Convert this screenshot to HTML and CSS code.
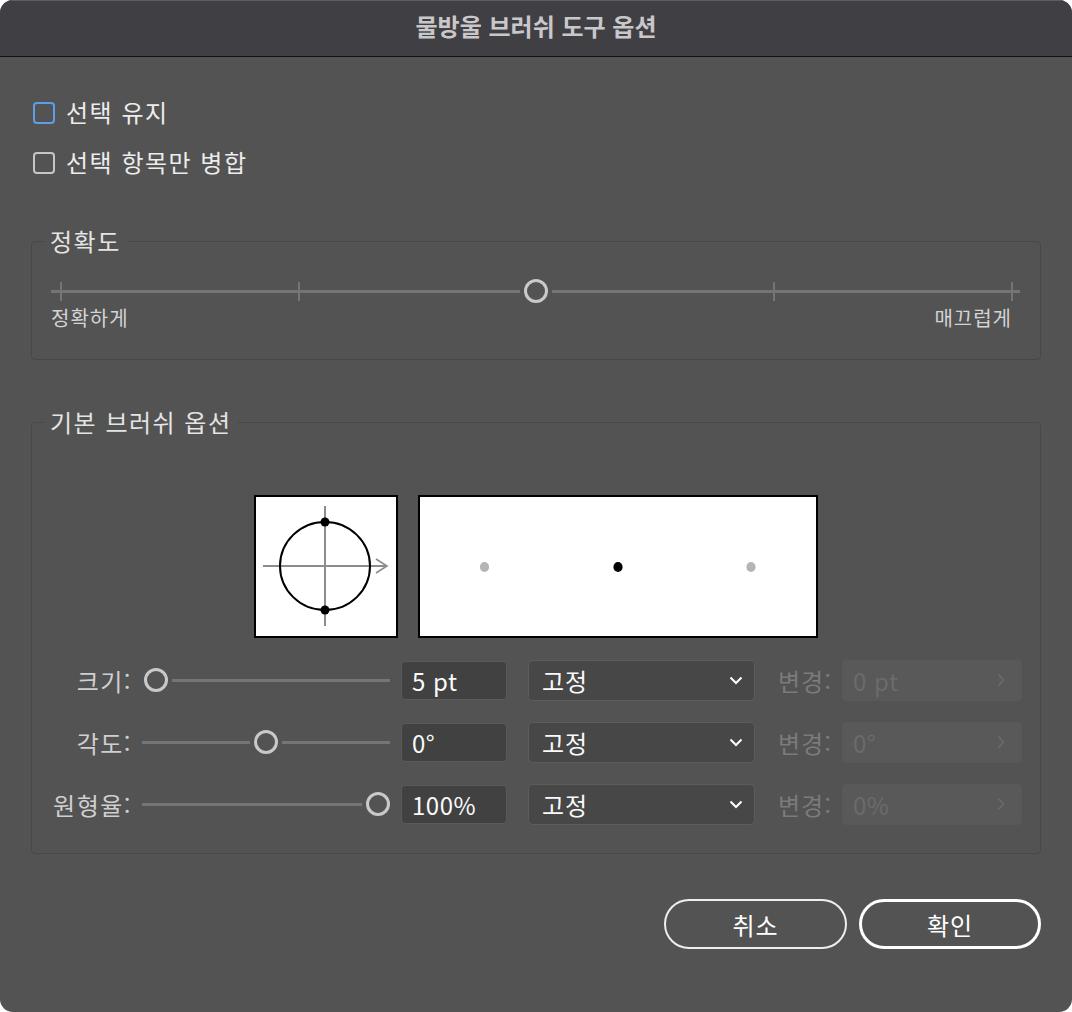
FILE: index.html
```html
<!DOCTYPE html>
<html lang="ko">
<head>
    <meta charset="UTF-8">
    <meta name="viewport" content="width=device-width, initial-scale=1.0">
    <title>물방울 브러쉬 도구 옵션</title>
    <link rel="stylesheet" href="styles.css">
</head>
<body>
    <div class="dialog">
        <div class="titlebar">물방울 브러쉬 도구 옵션</div>

        <div class="content">
            <label class="check-row">
                <span class="checkbox focused"></span>
                <span>선택 유지</span>
            </label>
            <label class="check-row second">
                <span class="checkbox"></span>
                <span>선택 항목만 병합</span>
            </label>

            <fieldset class="group precision-group">
                <legend>정확도</legend>
                <div class="precision">
                    <div class="track"></div>
                    <div class="ticks">
                        <span></span><span></span><span></span><span></span><span></span>
                    </div>
                    <div class="thumb big" style="left: 473px;"></div>
                </div>
                <div class="precision-labels">
                    <span>정확하게</span>
                    <span>매끄럽게</span>
                </div>
            </fieldset>

            <fieldset class="group brush-group">
                <legend>기본 브러쉬 옵션</legend>

                <div class="preview">
                    <div class="preview-box shape">
                        <svg width="140" height="139" viewBox="0 0 140 139">
                            <line x1="7" y1="69" x2="131" y2="69" stroke="#8c8c8c" stroke-width="2"/>
                            <polyline points="120,62 131,69 120,76" fill="none" stroke="#8c8c8c" stroke-width="1.6"/>
                            <line x1="69" y1="9" x2="69" y2="129" stroke="#8c8c8c" stroke-width="2"/>
                            <ellipse cx="69" cy="69" rx="45" ry="44" fill="none" stroke="#000" stroke-width="2"/>
                            <circle cx="69" cy="25" r="4.5" fill="#000"/>
                            <circle cx="69" cy="113" r="4.5" fill="#000"/>
                        </svg>
                    </div>
                    <div class="preview-box stroke">
                        <svg width="396" height="139" viewBox="0 0 396 139">
                            <ellipse cx="64.5" cy="70" rx="4.6" ry="5" fill="#b5b5b5"/>
                            <ellipse cx="198" cy="70" rx="4.6" ry="5" fill="#000"/>
                            <ellipse cx="331" cy="70" rx="4.6" ry="5" fill="#b5b5b5"/>
                        </svg>
                    </div>
                </div>

                <div class="option-row">
                    <span class="row-label">크기:</span>
                    <div class="slider">
                        <div class="track"></div>
                        <div class="thumb" style="left: 2px;"></div>
                    </div>
                    <div class="field">5 pt</div>
                    <div class="select">
                        <span>고정</span>
                        <svg class="chevron" width="14" height="9" viewBox="0 0 14 9"><polyline points="1.5,1.5 7,7 12.5,1.5" fill="none" stroke="#fff" stroke-width="2"/></svg>
                    </div>
                    <span class="vary-label">변경:</span>
                    <div class="field disabled">
                        <span>0 pt</span>
                        <svg width="8" height="14" viewBox="0 0 8 14"><polyline points="1.5,1.5 6.5,7 1.5,12.5" fill="none" stroke="#6b6b6b" stroke-width="1.6"/></svg>
                    </div>
                </div>

                <div class="option-row">
                    <span class="row-label">각도:</span>
                    <div class="slider">
                        <div class="track"></div>
                        <div class="thumb" style="left: 112px;"></div>
                    </div>
                    <div class="field">0°</div>
                    <div class="select">
                        <span>고정</span>
                        <svg class="chevron" width="14" height="9" viewBox="0 0 14 9"><polyline points="1.5,1.5 7,7 12.5,1.5" fill="none" stroke="#fff" stroke-width="2"/></svg>
                    </div>
                    <span class="vary-label">변경:</span>
                    <div class="field disabled">
                        <span>0°</span>
                        <svg width="8" height="14" viewBox="0 0 8 14"><polyline points="1.5,1.5 6.5,7 1.5,12.5" fill="none" stroke="#6b6b6b" stroke-width="1.6"/></svg>
                    </div>
                </div>

                <div class="option-row">
                    <span class="row-label">원형율:</span>
                    <div class="slider">
                        <div class="track"></div>
                        <div class="thumb" style="left: 224px;"></div>
                    </div>
                    <div class="field">100%</div>
                    <div class="select">
                        <span>고정</span>
                        <svg class="chevron" width="14" height="9" viewBox="0 0 14 9"><polyline points="1.5,1.5 7,7 12.5,1.5" fill="none" stroke="#fff" stroke-width="2"/></svg>
                    </div>
                    <span class="vary-label">변경:</span>
                    <div class="field disabled">
                        <span>0%</span>
                        <svg width="8" height="14" viewBox="0 0 8 14"><polyline points="1.5,1.5 6.5,7 1.5,12.5" fill="none" stroke="#6b6b6b" stroke-width="1.6"/></svg>
                    </div>
                </div>
            </fieldset>

            <div class="actions">
                <button class="btn">취소</button>
                <button class="btn primary">확인</button>
            </div>
        </div>
    </div>
</body>
</html>
```

FILE: styles.css
```css
body {
    margin: 0;
    background: #ffffff;
    font-family: "Noto Sans CJK KR", "Noto Sans", sans-serif;
}

.dialog {
    width: 1072px;
    height: 1012px;
    border-radius: 13px;
    overflow: hidden;
    background-color: #535353;
    color: #e8e8e8;
}

.titlebar {
    box-sizing: border-box;
    height: 57px;
    padding-bottom: 5px;
    background-color: #403f44;
    border-bottom: 1px solid #101010;
    box-shadow: inset 0 1px 0 #5d5c61;
    display: flex;
    align-items: center;
    justify-content: center;
    font-size: 24px;
    font-weight: bold;
    color: #c8c8ca;
}

.content {
    padding: 41px 31px 0 31px;
}

/* 체크박스 */
.check-row {
    display: flex;
    align-items: center;
    gap: 11px;
    height: 30px;
    margin-left: 2px;
    font-size: 24px;
    letter-spacing: 1.5px;
    color: #ececec;
}

.check-row span:last-child {
    margin-top: -3px;
}

.check-row.second {
    margin-top: 20px;
}

.checkbox {
    width: 18px;
    height: 18px;
    border: 2px solid #c6c6c6;
    border-radius: 4px;
}

.checkbox.focused {
    border-color: #5e9ee8;
}

/* 그룹 */
.group {
    margin: 0;
    padding: 0;
    min-inline-size: 0;
    border: 1px solid #484848;
    border-radius: 4px;
}

.group legend {
    margin-left: 12px;
    padding: 0 6px;
    font-size: 24px;
    letter-spacing: 1.5px;
    line-height: 26px;
    color: #e4e4e4;
}

.precision-group {
    margin-top: 50px;
    padding: 25px 0 30px 0;
}

.precision {
    position: relative;
    height: 24px;
    margin: 0 20px 0 19px;
}

.track {
    position: absolute;
    left: 0;
    right: 0;
    top: 11px;
    height: 3px;
    background-color: #757575;
}

.ticks {
    position: absolute;
    left: 9px;
    right: 7px;
    top: 3px;
    height: 19px;
    display: flex;
    justify-content: space-between;
}

.ticks span {
    width: 2px;
    background-color: #757575;
}

.thumb {
    position: absolute;
    top: 0;
    width: 18px;
    height: 18px;
    border: 3px solid #c9c9c9;
    border-radius: 50%;
    background-color: #535353;
    box-shadow: 0 0 0 4px #535353;
}

.precision-labels {
    display: flex;
    justify-content: space-between;
    margin: 4px 28px 0 19px;
    font-size: 20px;
    letter-spacing: 1px;
    line-height: 22px;
    color: #d4d4d4;
}

.brush-group {
    margin-top: 49px;
    padding: 60px 0 29px 0;
}

.preview {
    display: flex;
    justify-content: center;
    gap: 20px;
}

.preview-box {
    height: 139px;
    border: 2px solid #000;
    background-color: #fff;
}

.preview-box svg {
    display: block;
}

.shape {
    width: 140px;
}

.stroke {
    width: 396px;
}

/* 옵션 행 */
.option-row {
    display: flex;
    align-items: center;
    height: 40px;
    margin-top: 22px;
}

.option-row:first-of-type {
    margin-top: 21px;
}

.row-label {
    width: 100px;
    text-align: right;
    font-size: 24px;
    letter-spacing: 1.5px;
    white-space: nowrap;
    color: #cfcfcf;
}

.slider {
    position: relative;
    width: 248px;
    height: 24px;
    margin-left: 10px;
}

.field {
    box-sizing: border-box;
    width: 106px;
    height: 39px;
    margin-left: 11px;
    padding: 0 10px;
    display: flex;
    align-items: center;
    background-color: #414141;
    border: 1.5px solid #5a5a5a;
    border-radius: 4px;
    font-size: 24px;
    letter-spacing: 0.5px;
    color: #fafafa;
}

.select {
    box-sizing: border-box;
    width: 227px;
    height: 41px;
    margin-left: 21px;
    padding: 0 11px 0 13px;
    display: flex;
    align-items: center;
    justify-content: space-between;
    background-color: #474747;
    border: 1.5px solid #5c5c5c;
    border-radius: 5px;
    font-size: 24px;
    letter-spacing: 1px;
    color: #fafafa;
}

.vary-label {
    width: 54px;
    margin-left: 23px;
    font-size: 24px;
    letter-spacing: 1px;
    white-space: nowrap;
    color: #7b7b7b;
}

.field.disabled {
    width: 180px;
    height: 41px;
    margin-left: 10px;
    justify-content: space-between;
    padding-right: 16px;
    background-color: #595959;
    border-color: #595959;
    color: #6b6b6b;
}

/* 버튼 */
.actions {
    display: flex;
    justify-content: flex-end;
    gap: 12px;
    margin-top: 45px;
}

.btn {
    box-sizing: border-box;
    width: 183px;
    height: 50px;
    border: 2px solid #eeeeee;
    border-radius: 25px;
    background: transparent;
    font-family: inherit;
    font-size: 24px;
    letter-spacing: 1px;
    color: #ffffff;
}

.btn.primary {
    width: 182px;
    border: 3px solid #ffffff;
}
```
